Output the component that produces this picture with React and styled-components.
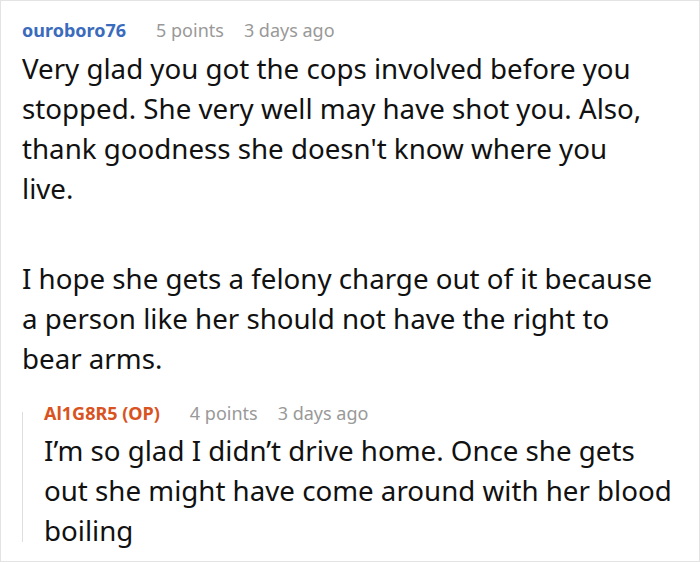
import React from "react";
import styled, { createGlobalStyle } from "styled-components";

const GlobalStyle = createGlobalStyle`
  html, body {
    margin: 0;
    padding: 0;
    background: #fff;
  }
  body {
    font-family: "Noto Sans", "Open Sans", sans-serif;
    color: #111;
  }
`;

const Card = styled.div`
  box-sizing: border-box;
  width: 700px;
  height: 562px;
  border: 1px solid #e3e3e3;
  padding: 16px 23px 0 21px;
`;

const Meta = styled.div`
  display: flex;
  align-items: center;
  gap: 20px;
  height: 26px;
  font-size: 18px;
  line-height: 26px;
`;

const Author = styled.span`
  font-weight: 700;
  color: ${(p) => p.color};
  margin-right: 10px;
`;

const Info = styled.span`
  color: #999;
`;

const Body = styled.div`
  margin-top: ${(p) => (p.$reply ? "4px" : "5px")};
  padding-right: ${(p) => (p.$reply ? "0" : "14px")};
  font-size: 27.7px;
  line-height: 40px;
`;

const Para = styled.p`
  margin: 0;
  & + & {
    margin-top: 50px;
  }
`;

const Reply = styled.div`
  position: relative;
  margin-top: 22px;
  padding-left: 22px;

  &::before {
    content: "";
    position: absolute;
    left: 0;
    top: 12px;
    bottom: 8px;
    width: 1px;
    background: #dedede;
  }
`;

const comment = {
  author: "ouroboro76",
  points: "5 points",
  time: "3 days ago",
  paragraphs: [
    "Very glad you got the cops involved before you stopped. She very well may have shot you. Also, thank goodness she doesn't know where you live.",
    "I hope she gets a felony charge out of it because a person like her should not have the right to bear arms.",
  ],
};

const reply = {
  author: "Al1G8R5 (OP)",
  points: "4 points",
  time: "3 days ago",
  paragraphs: [
    "I\u2019m so glad I didn\u2019t drive home. Once she gets out she might have come around with her blood boiling",
  ],
};

const Comment = ({ data, color, isReply }) => (
  <>
    <Meta>
      <Author color={color}>{data.author}</Author>
      <Info>{data.points}</Info>
      <Info>{data.time}</Info>
    </Meta>
    <Body $reply={isReply}>
      {data.paragraphs.map((t, i) => (
        <Para key={i}>{t}</Para>
      ))}
    </Body>
  </>
);

const App = () => {
  return (
    <>
      <GlobalStyle />
      <Card>
        <Comment data={comment} color="#3a6bbd" />
        <Reply>
          <Comment data={reply} color="#d8531f" isReply />
        </Reply>
      </Card>
    </>
  );
};

export default App;
